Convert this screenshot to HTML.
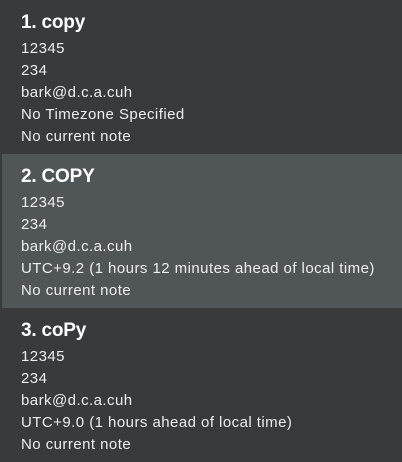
<!DOCTYPE html>
<html><head><style>
body{margin:0;width:402px;height:462px;background:#383a3c;font-family:"Liberation Sans",sans-serif;color:#fff;overflow:hidden}
.c{position:absolute;left:0;width:402px;height:154px}
.s{background:#505658;left:2px;width:400px}
.t{position:absolute;left:21px;top:12px;font-size:19px;font-weight:bold;letter-spacing:-0.2px}
.l{position:absolute;left:21px;font-size:15px;color:#eee;white-space:nowrap;letter-spacing:0.45px}
</style></head><body>
<div class="c" style="top:0">
<div class="t">1. copy</div>
<div class="l" style="top:40px">12345</div><div class="l" style="top:62px">234</div><div class="l" style="top:84px">bark@d.c.a.cuh</div><div class="l" style="top:106px">No Timezone Specified</div><div class="l" style="top:128px">No current note</div>
</div>
<div class="c s" style="top:154px">
<div class="t" style="left:19px">2. COPY</div>
<div class="l" style="top:40px;left:19px">12345</div><div class="l" style="top:62px;left:19px">234</div><div class="l" style="top:84px;left:19px">bark@d.c.a.cuh</div><div class="l" style="top:106px;left:19px">UTC+9.2 (1 hours 12 minutes ahead of local time)</div><div class="l" style="top:128px;left:19px">No current note</div>
</div>
<div class="c" style="top:308px">
<div class="t">3. coPy</div>
<div class="l" style="top:40px">12345</div><div class="l" style="top:62px">234</div><div class="l" style="top:84px">bark@d.c.a.cuh</div><div class="l" style="top:106px">UTC+9.0 (1 hours ahead of local time)</div><div class="l" style="top:128px">No current note</div>
</div>
</body></html>
